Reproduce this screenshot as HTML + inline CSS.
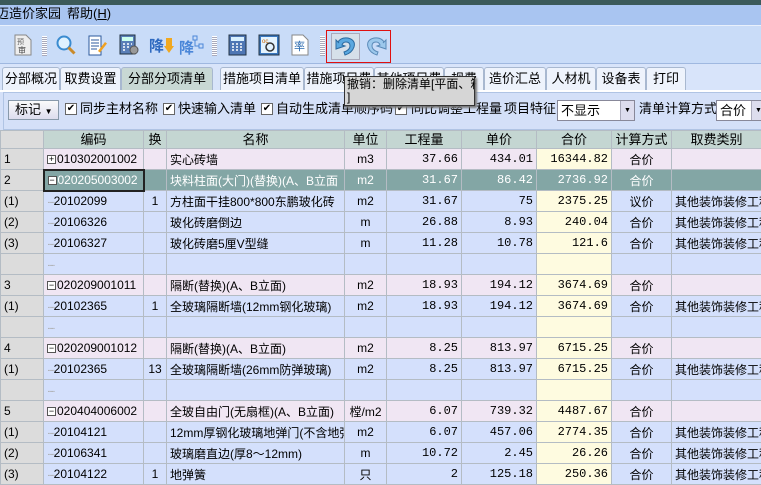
<!DOCTYPE html>
<html><head><meta charset="utf-8">
<style>
*{margin:0;padding:0;box-sizing:border-box}
body{width:761px;height:471px;overflow:hidden;background:#d4e0f8;font-family:"Liberation Sans","Noto Sans CJK SC",sans-serif;font-size:12px;color:#000;position:relative}
.abs{position:absolute}
#title{left:0;top:0;width:761px;height:5px;background:#3c5a5a}
#menu{left:0;top:5px;width:761px;height:20px;background:#a9c5f1;font-size:13px;line-height:18px}
#tool{left:0;top:25px;width:761px;height:39px;background:#c9dcf8;border-top:1px solid #e8f0fc;border-bottom:1px solid #9fb8e0}
.ic{position:absolute;top:8px;width:22px;height:22px}
.sep{position:absolute;top:10px;width:5px;height:20px;background:repeating-linear-gradient(#fff 0 1px,#aab 1px 2px)}
#tabs{left:0;top:64px;width:761px;height:26px;background:#d8e4fa}
.tab{position:absolute;top:3px;height:23px;border:1px solid #a8b8d0;border-bottom:none;background:#eef3fc;border-radius:3px 3px 0 0;font-size:13px;line-height:22px;text-align:center}
#opt{left:0;top:90px;width:761px;height:40px;background:#d4e0f8;border-top:2px solid #fff}
.cb{position:absolute;top:11px;width:12px;height:12px;border:1px solid #666;background:#fff;font-size:10px;line-height:10px;text-align:center}
.lbl{position:absolute;top:9px;font-size:13px;line-height:16px}
table{position:absolute;left:0;top:130px;border-collapse:collapse;table-layout:fixed;width:761px}
td,th{border:1px solid #b4bcc4;height:21px;padding:0 3px;white-space:nowrap;overflow:hidden;font-weight:normal}
th{height:18px;background:#c4d6d2;font-size:13px;line-height:16px}
th.c0{background:#dcdcdc}
td.n{background:#dcdcdc;font-size:12px}
.num{text-align:right;font-family:"Liberation Mono",monospace;font-size:12px}
.cen{text-align:center}
.code{font-family:"Liberation Sans",sans-serif;font-size:12px}
tr.p td{background:#f0e6f3}
tr.b td{background:#d4e0fc}
tr.s td{background:#83a6a5;color:#fff}
tr.p td.y,tr.b td.y{background:#fefbe0}
tr td.n{background:#dcdcdc!important;color:#000!important}
.pm{display:inline-block;width:9px;height:9px;border:1px solid #555;background:#fff;font-size:9px;line-height:7px;text-align:center;color:#000;margin-right:1px;vertical-align:middle}
.dot{color:#aaa;letter-spacing:-2px;font-size:10px}
#tip{left:344px;top:76px;width:131px;height:30px;background:#d6d6d6;border:1px solid #333;box-shadow:2px 2px 2px #777;font-size:12px;line-height:13px;padding:1px 2px;white-space:nowrap;overflow:hidden}
</style></head><body>
<div id="title" class="abs"></div>
<div id="menu" class="abs"><span style="position:absolute;left:-4px">迈造价家园</span><span style="position:absolute;left:67px">帮助(<u>H</u>)</span></div>
<div id="tool" class="abs">
 <svg class="ic" style="left:12px" viewBox="0 0 22 22"><path d="M3 1h11l5 5v15H3z" fill="#eee" stroke="#888"/><text x="5" y="10" font-size="7" fill="#666">预</text><text x="6" y="19" font-size="8" fill="#444">审</text></svg>
 <div class="sep" style="left:42px"></div>
 <svg class="ic" style="left:55px" viewBox="0 0 22 22"><circle cx="9" cy="9" r="6.5" fill="#dff2ff" stroke="#3a8bd0" stroke-width="2"/><path d="M13.5 13.5l6 6" stroke="#c98a2a" stroke-width="3"/></svg>
 <svg class="ic" style="left:86px" viewBox="0 0 22 22"><path d="M3 2h12v19H3z" fill="#fff" stroke="#2d5a9c"/><path d="M5 6h8M5 9h8M5 12h8M5 15h6" stroke="#2d5a9c"/><path d="M12 17l7-9 2 1.5-7 9z" fill="#f0a020"/></svg>
 <svg class="ic" style="left:118px" viewBox="0 0 22 22"><rect x="2" y="1" width="15" height="19" fill="#5a7fb8" stroke="#234"/><rect x="4" y="3" width="11" height="4" fill="#cfe"/><path d="M5 10h2M9 10h2M13 10h1M5 13h2M9 13h2M5 16h2" stroke="#fff" stroke-width="1.5"/><circle cx="16" cy="16" r="4" fill="#999" stroke="#555"/></svg>
 <div class="abs" style="left:149px;top:9px;font-size:15px;font-weight:bold;color:#2f6ac0">降</div><svg class="abs" style="left:164px;top:12px" width="10" height="16"><path d="M2 0h6v8h2l-5 7-5-7h2z" fill="#f0a820"/></svg>
 <div class="abs" style="left:179px;top:11px;font-size:15px;font-weight:bold;color:#4a86d8">降</div><svg class="abs" style="left:192px;top:8px" width="12" height="20"><path d="M1 2h4v4H1zM7 10h4v4H7zM3 6v6h4" stroke="#4a86d8" fill="none"/></svg>
 <div class="sep" style="left:212px"></div>
 <svg class="ic" style="left:227px" viewBox="0 0 22 22"><rect x="2" y="1" width="17" height="20" fill="#4e76b4" stroke="#234"/><rect x="4" y="3" width="13" height="4" fill="#d8f0ff"/><path d="M5 10h2M9 10h2M13 10h2M5 13h2M9 13h2M13 13h2M5 16h2M9 16h2M13 16h2" stroke="#fff" stroke-width="1.5"/></svg>
 <svg class="ic" style="left:258px" viewBox="0 0 22 22"><rect x="1" y="1" width="20" height="20" fill="#3a78c0" stroke="#234"/><rect x="3" y="3" width="16" height="16" fill="#e4f4ff"/><circle cx="12" cy="13" r="4" fill="none" stroke="#333" stroke-width="1.5"/><text x="4" y="9" font-size="6" fill="#c60">oc</text></svg>
 <svg class="ic" style="left:289px" viewBox="0 0 22 22"><path d="M3 1h11l5 5v15H3z" fill="#fff" stroke="#888"/><text x="5" y="16" font-size="11" fill="#2a6ab0">率</text></svg>
 <div class="sep" style="left:320px"></div>
 <div class="abs" style="left:326px;top:4px;width:65px;height:33px;border:1px solid #e01010"></div>
 <div class="abs" style="left:331px;top:7px;width:29px;height:27px;background:#d6e0ea;border:1px solid #aab"></div>
 <svg class="abs" style="left:333px;top:8px" width="26" height="24" viewBox="0 0 26 24"><path d="M5 8 Q8 3 15 4 Q23 6 21 13 Q19 19 12 21 L11 18 Q17 16 17 12 Q17 8 13 8 Q10 8 9 11 L12 12 L3 15 L3 6 L6 9z" fill="#5aa8e0" stroke="#2a6aa0"/></svg>
 <svg class="abs" style="left:363px;top:8px" width="26" height="24" viewBox="0 0 26 24"><path d="M21 8 Q18 3 11 4 Q3 6 5 13 Q7 19 14 21 L15 18 Q9 16 9 12 Q9 8 13 8 Q16 8 17 11 L14 12 L23 15 L23 6 L20 9z" fill="#9cc8ec" stroke="#5a8ab8"/></svg>
</div>
<div id="tabs" class="abs">
 <div class="tab" style="left:2px;width:58px">分部概况</div>
 <div class="tab" style="left:60px;width:61px">取费设置</div>
 <div class="tab" style="left:121px;width:92px;background:#c8d8d4;height:24px">分部分项清单</div>
 <div class="tab" style="left:220px;width:84px">措施项目清单</div>
 <div class="tab" style="left:304px;width:70px">措施项目费</div>
 <div class="tab" style="left:374px;width:70px">其他项目费</div>
 <div class="tab" style="left:444px;width:40px">规费</div>
 <div class="tab" style="left:484px;width:62px">造价汇总</div>
 <div class="tab" style="left:546px;width:50px">人材机</div>
 <div class="tab" style="left:596px;width:50px">设备表</div>
 <div class="tab" style="left:646px;width:40px">打印</div>
</div>
<div id="opt" class="abs">
 <div class="abs" style="left:3px;top:0;width:758px;height:38px;border:1px solid #b0c4e4;border-right:none"></div>
 <div class="abs" style="left:8px;top:8px;width:51px;height:20px;border:1px solid #8899aa;background:linear-gradient(#fafafa,#dde);font-size:13px;line-height:18px;padding-left:6px">标记 <span style="font-size:8px">▼</span></div>
 <div class="cb" style="left:65px">✔</div><div class="lbl" style="left:80px">同步主材名称</div>
 <div class="cb" style="left:163px">✔</div><div class="lbl" style="left:178px">快速输入清单</div>
 <div class="cb" style="left:261px">✔</div><div class="lbl" style="left:276px">自动生成清单顺序码</div>
 <div class="cb" style="left:395px">✔</div><div class="lbl" style="left:411px">同比调整工程量</div>
 <div class="lbl" style="left:504px">项目特征</div>
 <div class="abs" style="left:557px;top:8px;width:78px;height:21px;background:#fff;border:1px solid #889;font-size:13px;line-height:19px;padding-left:3px">不显示<span style="position:absolute;right:0;top:0;width:14px;height:19px;background:#dde;border-left:1px solid #aab;font-size:7px;text-align:center">▼</span></div>
 <div class="lbl" style="left:639px">清单计算方式</div>
 <div class="abs" style="left:716px;top:8px;width:50px;height:21px;background:#fff;border:1px solid #889;font-size:13px;line-height:19px;padding-left:3px">合价<span style="position:absolute;right:0;top:0;width:14px;height:19px;background:#dde;border-left:1px solid #aab;font-size:7px;text-align:center">▼</span></div>
</div>
<table>
<colgroup><col style="width:43px"><col style="width:100px"><col style="width:23px"><col style="width:178px"><col style="width:42px"><col style="width:75px"><col style="width:75px"><col style="width:75px"><col style="width:60px"><col style="width:90px"></colgroup>
<tr><th class="c0"></th><th>编码</th><th>换</th><th>名称</th><th>单位</th><th>工程量</th><th>单价</th><th>合价</th><th>计算方式</th><th>取费类别</th></tr>
<tr class="p"><td class="n">1</td><td class="code"><span class="pm">+</span>010302001002</td><td></td><td>实心砖墙</td><td class="cen">m3</td><td class="num">37.66</td><td class="num">434.01</td><td class="num y">16344.82</td><td class="cen">合价</td><td></td></tr>
<tr class="s"><td class="n">2</td><td class="code" style="border:2px solid #222"><span class="pm">−</span>020205003002</td><td></td><td>块料柱面(大门)(替换)(A、B立面</td><td class="cen">m2</td><td class="num">31.67</td><td class="num">86.42</td><td class="num">2736.92</td><td class="cen">合价</td><td></td></tr>
<tr class="b"><td class="n">(1)</td><td class="code"><span class="dot">·····</span>20102099</td><td class="cen">1</td><td>方柱面干挂800*800东鹏玻化砖</td><td class="cen">m2</td><td class="num">31.67</td><td class="num">75</td><td class="num y">2375.25</td><td class="cen">议价</td><td>其他装饰装修工程</td></tr>
<tr class="b"><td class="n">(2)</td><td class="code"><span class="dot">·····</span>20106326</td><td></td><td>玻化砖磨倒边</td><td class="cen">m</td><td class="num">26.88</td><td class="num">8.93</td><td class="num y">240.04</td><td class="cen">合价</td><td>其他装饰装修工程</td></tr>
<tr class="b"><td class="n">(3)</td><td class="code"><span class="dot">·····</span>20106327</td><td></td><td>玻化砖磨5厘V型缝</td><td class="cen">m</td><td class="num">11.28</td><td class="num">10.78</td><td class="num y">121.6</td><td class="cen">合价</td><td>其他装饰装修工程</td></tr>
<tr class="b"><td class="n"></td><td><span class="dot">·····</span></td><td></td><td></td><td></td><td></td><td></td><td class="y"></td><td></td><td></td></tr>
<tr class="p"><td class="n">3</td><td class="code"><span class="pm">−</span>020209001011</td><td></td><td>隔断(替换)(A、B立面)</td><td class="cen">m2</td><td class="num">18.93</td><td class="num">194.12</td><td class="num y">3674.69</td><td class="cen">合价</td><td></td></tr>
<tr class="b"><td class="n">(1)</td><td class="code"><span class="dot">·····</span>20102365</td><td class="cen">1</td><td>全玻璃隔断墙(12mm钢化玻璃)</td><td class="cen">m2</td><td class="num">18.93</td><td class="num">194.12</td><td class="num y">3674.69</td><td class="cen">合价</td><td>其他装饰装修工程</td></tr>
<tr class="b"><td class="n"></td><td><span class="dot">·····</span></td><td></td><td></td><td></td><td></td><td></td><td class="y"></td><td></td><td></td></tr>
<tr class="p"><td class="n">4</td><td class="code"><span class="pm">−</span>020209001012</td><td></td><td>隔断(替换)(A、B立面)</td><td class="cen">m2</td><td class="num">8.25</td><td class="num">813.97</td><td class="num y">6715.25</td><td class="cen">合价</td><td></td></tr>
<tr class="b"><td class="n">(1)</td><td class="code"><span class="dot">·····</span>20102365</td><td class="cen">13</td><td>全玻璃隔断墙(26mm防弹玻璃)</td><td class="cen">m2</td><td class="num">8.25</td><td class="num">813.97</td><td class="num y">6715.25</td><td class="cen">合价</td><td>其他装饰装修工程</td></tr>
<tr class="b"><td class="n"></td><td><span class="dot">·····</span></td><td></td><td></td><td></td><td></td><td></td><td class="y"></td><td></td><td></td></tr>
<tr class="p"><td class="n">5</td><td class="code"><span class="pm">−</span>020404006002</td><td></td><td>全玻自由门(无扇框)(A、B立面)</td><td class="cen">樘/m2</td><td class="num">6.07</td><td class="num">739.32</td><td class="num y">4487.67</td><td class="cen">合价</td><td></td></tr>
<tr class="b"><td class="n">(1)</td><td class="code"><span class="dot">·····</span>20104121</td><td></td><td>12mm厚钢化玻璃地弹门(不含地弹簧)</td><td class="cen">m2</td><td class="num">6.07</td><td class="num">457.06</td><td class="num y">2774.35</td><td class="cen">合价</td><td>其他装饰装修工程</td></tr>
<tr class="b"><td class="n">(2)</td><td class="code"><span class="dot">·····</span>20106341</td><td></td><td>玻璃磨直边(厚8～12mm)</td><td class="cen">m</td><td class="num">10.72</td><td class="num">2.45</td><td class="num y">26.26</td><td class="cen">合价</td><td>其他装饰装修工程</td></tr>
<tr class="b"><td class="n">(3)</td><td class="code"><span class="dot">·····</span>20104122</td><td class="cen">1</td><td>地弹簧</td><td class="cen">只</td><td class="num">2</td><td class="num">125.18</td><td class="num y">250.36</td><td class="cen">合价</td><td>其他装饰装修工程</td></tr>
</table>
<div id="tip" class="abs">撤销：删除清单[平面、箱式招牌<br>]</div>
</body></html>
